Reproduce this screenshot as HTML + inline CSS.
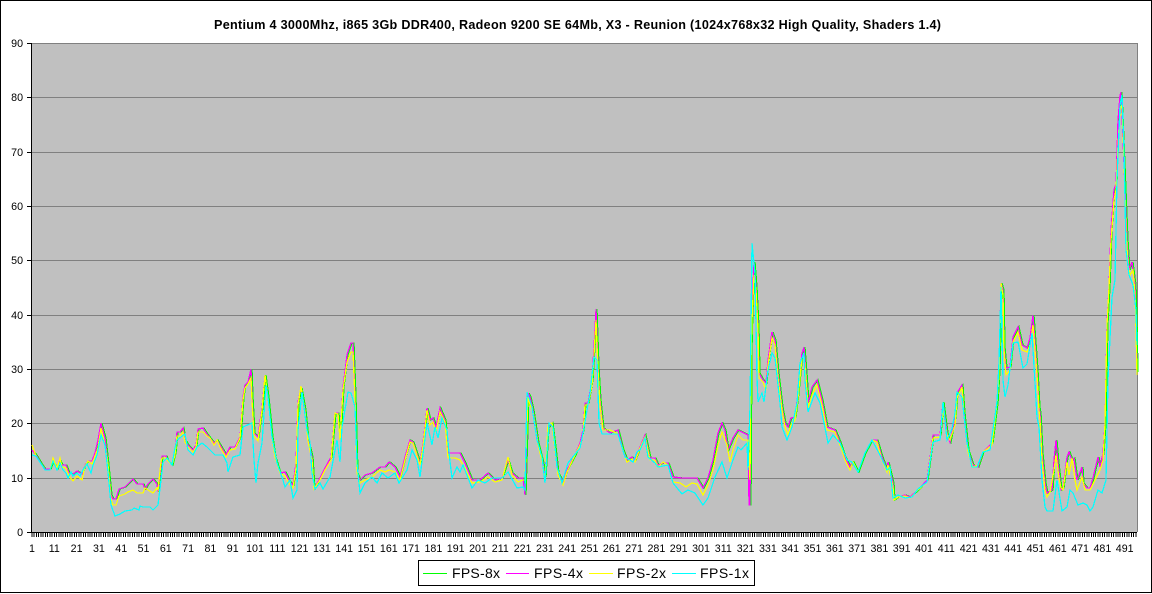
<!DOCTYPE html>
<html><head><meta charset="utf-8"><title>Chart</title>
<style>
html,body{margin:0;padding:0;background:#fff}
svg{display:block}
text{font-family:"Liberation Sans",Arial,sans-serif;fill:#000}
.l text{font-size:10.67px;text-anchor:middle}
.y text{font-size:10.67px;text-anchor:end}
.s{fill:none;stroke-width:1.25;shape-rendering:crispEdges;stroke-linejoin:miter}
</style></head><body>
<svg width="1152" height="594" viewBox="0 0 1152 594" xmlns="http://www.w3.org/2000/svg">
<rect x="0.5" y="0.5" width="1151" height="592" fill="#fff" stroke="#000"/>
<text x="214" y="29" font-size="12.6" font-weight="700" textLength="727">Pentium 4 3000Mhz, i865 3Gb DDR400, Radeon 9200 SE 64Mb, X3 - Reunion (1024x768x32 High Quality, Shaders 1.4)</text>
<rect x="31" y="43" width="1106" height="489" fill="#c0c0c0"/>
<g stroke="#808080" shape-rendering="crispEdges">
<path d="M31 43.5H1137.5V532M31 97.5H1137M31 152.5H1137M31 206.5H1137M31 260.5H1137M31 315.5H1137M31 369.5H1137M31 423.5H1137M31 478.5H1137" fill="none"/>
</g>
<g stroke="#000" shape-rendering="crispEdges" fill="none">
<path d="M31.5 43V533M31 532.5H1137"/>
<path d="M27 43.5H31M27 97.5H31M27 152.5H31M27 206.5H31M27 260.5H31M27 315.5H31M27 369.5H31M27 423.5H31M27 478.5H31M27 532.5H31"/>
<path d="M31.5 535H1137" stroke-width="4" stroke-dasharray="1 1.23"/>
</g>
<defs>
<polyline id="m" points="32,450 36,455 42,465 45,469 50,469 53,461 57,469 60,461 62,465 66,465 69,473 73,474 77,471 82,474 85,465 88,461 92,461 95,453 98,440 101,423 105,438 108,465 111,495 113,499 116,499 119,489 125,487 128,484 133,479 137,484 143,484 145,489 148,484 153,479 157,484 158,492 161,465 162,456 166,456 168,461 172,465 175,453 177,432 180,432 183,428 185,440 188,445 193,450 196,445 198,429 203,428 207,434 210,438 214,443 217,440 220,445 226,455 230,447 235,447 240,437 243,397 245,385 248,382 251,369 252,397 254,433 258,437 262,407 265,375 268,397 272,437 275,457 280,473 285,472 290,482 293,485 296,463 298,402 301,388 305,410 308,440 312,457 314,489 320,478 325,468 331,457 335,413 338,413 340,440 343,387 347,355 351,343 353,343 355,397 357,473 360,480 365,475 372,473 380,467 385,467 389,462 395,467 400,477 405,457 410,440 413,442 420,463 423,443 427,408 430,420 433,418 436,427 440,408 445,420 448,453 455,453 460,453 465,463 472,480 480,480 488,473 495,480 502,478 508,460 512,473 518,478 523,478 525,495 528,393 530,397 533,410 538,443 543,463 545,477 548,428 552,423 555,447 558,473 563,482 567,470 575,455 580,443 583,430 585,403 588,403 592,380 594,347 596,309 598,367 600,400 603,428 610,433 618,430 623,450 627,460 632,457 635,460 640,447 645,435 650,458 655,458 658,465 663,463 668,463 673,477 682,478 688,478 692,478 697,478 703,488 708,478 713,460 718,433 722,423 725,430 728,450 733,438 738,430 742,432 748,435 749,505 750,505 751,347 752,310 754,262 756,287 758,327 759,373 763,380 766,383 768,360 772,332 775,340 778,373 782,407 785,423 788,427 791,418 795,417 798,393 802,353 804,347 806,373 808,403 812,387 817,380 822,400 827,427 835,430 840,442 845,457 850,467 853,462 858,472 865,453 872,440 877,440 882,457 887,470 888,462 893,483 894,500 898,497 905,495 910,497 918,490 927,480 932,443 933,435 940,435 943,402 947,433 950,442 955,417 957,393 962,385 964,413 968,450 973,465 978,467 983,452 992,443 997,403 999,370 1001,283 1003,290 1004,347 1006,368 1010,367 1013,337 1018,327 1022,345 1027,348 1030,338 1033,315 1037,370 1039,407 1040,413 1042,453 1045,483 1047,493 1052,490 1054,460 1056,440 1058,463 1061,490 1063,488 1067,457 1069,452 1072,460 1074,458 1077,480 1082,467 1083,483 1087,488 1090,488 1093,478 1098,457 1100,467 1103,453 1105,423 1107,323 1109,287 1111,230 1114,190 1116,184 1118,120 1120,95 1121,92 1123,140 1125,190 1127,240 1129,270 1132,262 1135,285 1136,320 1137,372"/>
</defs>
<use href="#m" x="1" class="s" stroke="#00ff00"/>
<use href="#m" class="s" stroke="#ff00ff"/>
<polyline class="s" stroke="#ffff00" points="32,445 36,456 42,465 45,470 50,470 53,458 57,468 60,458 62,467 66,468 69,476 73,481 77,476 82,480 85,466 88,461 92,464 95,456 98,448 101,428 105,445 108,465 111,500 113,505 116,505 119,496 125,494 128,492 133,490 137,493 143,493 145,488 148,490 153,493 157,488 158,490 161,462 162,458 166,458 168,461 172,465 175,455 177,436 180,436 183,432 185,442 188,447 193,452 196,447 198,432 203,432 207,436 210,438 214,445 217,440 220,447 226,457 230,450 235,449 240,438 243,400 245,388 248,384 251,378 252,400 254,436 258,441 262,410 265,375 268,398 272,437 275,457 280,473 285,476 290,485 293,488 296,468 298,405 301,386 305,412 308,441 312,460 314,489 320,480 325,470 331,460 335,413 338,414 340,440 343,390 347,362 351,352 353,352 355,400 357,473 360,483 365,480 372,477 380,470 385,472 389,470 395,472 400,480 405,460 410,442 413,443 420,465 423,446 427,410 430,425 433,422 436,432 440,412 445,422 448,458 455,458 460,460 465,468 472,483 480,482 488,477 495,482 502,480 508,457 512,475 518,482 523,480 525,480 528,397 530,405 533,412 538,445 543,465 545,480 548,425 552,423 555,450 558,475 563,485 567,472 575,455 580,445 583,435 585,405 588,405 592,385 594,355 596,320 598,370 600,405 603,430 610,430 618,434 623,450 627,462 632,459 635,462 640,448 645,437 650,460 655,460 658,467 663,462 668,465 673,482 680,483 686,487 692,483 697,484 703,495 708,485 713,470 718,445 722,432 727,445 730,462 733,450 738,435 743,440 748,440 750,480 751,360 752,320 754,275 756,290 758,330 759,378 763,382 766,390 768,365 772,338 775,345 778,378 782,410 785,427 788,435 791,425 795,420 798,398 802,358 804,355 806,378 808,408 812,395 817,385 822,405 827,430 835,432 840,445 845,460 850,470 853,462 858,472 865,453 872,440 877,442 882,460 887,472 888,465 893,487 894,500 898,497 905,496 910,498 918,490 927,482 932,445 933,438 940,437 943,410 947,435 950,440 955,425 957,398 962,387 964,415 968,452 973,467 978,465 983,452 992,445 997,403 999,375 1001,283 1003,295 1004,350 1006,375 1010,370 1013,342 1018,332 1022,350 1027,352 1030,345 1033,325 1037,375 1039,410 1040,420 1042,460 1045,490 1047,497 1050,492 1054,470 1056,455 1059,478 1061,488 1063,490 1067,462 1069,475 1072,458 1075,480 1077,490 1082,477 1085,490 1090,490 1095,480 1100,470 1103,460 1105,423 1107,325 1109,287 1111,240 1114,200 1116,190 1118,145 1120,110 1122,105 1124,160 1126,230 1128,265 1130,275 1133,270 1135,295 1136,330 1137,375"/>
<polyline class="s" stroke="#00ffff" points="32,455 36,456 42,465 45,470 50,470 53,461 57,470 60,463 63,470 66,473 68,478 71,472 73,476 77,473 80,476 83,470 87,464 91,473 93,465 97,455 101,435 105,445 108,472 111,505 115,516 120,514 125,511 132,510 134,508 139,510 140,506 143,507 150,507 153,510 158,505 161,480 163,462 167,458 172,465 175,448 177,440 185,434 188,450 193,455 197,447 202,443 207,447 210,450 215,455 223,455 227,463 228,472 233,457 240,455 243,427 252,423 254,460 256,483 258,463 262,443 266,385 268,397 272,437 277,463 282,477 285,487 290,480 293,498 297,490 298,430 302,392 307,430 310,442 312,473 315,489 320,483 323,489 330,477 337,440 340,462 342,427 348,392 351,393 355,407 357,463 360,493 365,483 372,477 377,483 382,473 388,478 395,473 399,483 407,470 412,450 417,460 420,477 427,423 432,445 435,427 438,438 442,418 447,430 449,453 452,478 457,467 460,472 463,465 472,488 478,480 485,483 492,478 502,478 508,472 517,488 523,487 525,490 527,392 532,407 537,440 542,457 545,483 549,423 553,427 557,467 562,483 568,463 580,448 583,433 590,393 594,357 597,360 599,423 602,434 618,434 625,457 633,462 637,452 640,450 645,438 648,457 655,463 658,467 668,465 673,483 682,494 688,490 695,493 703,505 708,498 715,477 722,462 727,478 733,460 738,447 741,450 747,443 748,470 750,407 752,243 755,273 757,377 758,402 762,393 764,402 768,370 772,353 775,358 780,403 782,427 787,440 792,427 797,403 800,363 804,353 805,380 808,412 815,393 820,403 828,443 833,435 840,443 847,460 852,462 858,472 865,453 872,440 880,455 887,470 890,467 893,498 898,495 905,498 912,497 918,489 927,482 933,442 940,440 943,402 947,440 952,429 955,413 957,392 962,397 967,443 972,467 977,467 983,452 990,450 997,402 999,362 1001,287 1003,380 1005,397 1008,385 1013,343 1018,342 1023,368 1027,364 1032,333 1035,383 1037,417 1039,427 1042,480 1045,507 1047,511 1053,511 1057,480 1062,511 1067,507 1070,490 1073,493 1078,505 1083,503 1087,505 1090,511 1093,507 1098,490 1102,493 1106,480 1108,380 1112,297 1115,280 1117,180 1120,105 1122,95 1124,150 1126,250 1129,275 1133,285 1136,310 1137,345"/>
<g class="y">
<text x="23" y="47">90</text><text x="23" y="101">80</text><text x="23" y="156">70</text><text x="23" y="210">60</text><text x="23" y="264">50</text><text x="23" y="319">40</text><text x="23" y="373">30</text><text x="23" y="427">20</text><text x="23" y="482">10</text><text x="23" y="536">0</text>
</g>
<g class="l">
<text x="32" y="552">1</text><text x="54.3" y="552">11</text><text x="76.6" y="552">21</text><text x="98.9" y="552">31</text><text x="121.2" y="552">41</text><text x="143.5" y="552">51</text><text x="165.8" y="552">61</text><text x="188.1" y="552">71</text><text x="210.4" y="552">81</text><text x="232.7" y="552">91</text>
<text x="255" y="552">101</text><text x="277.3" y="552">111</text><text x="299.6" y="552">121</text><text x="321.9" y="552">131</text><text x="344.2" y="552">141</text><text x="366.5" y="552">151</text><text x="388.8" y="552">161</text><text x="411.1" y="552">171</text><text x="433.4" y="552">181</text><text x="455.7" y="552">191</text>
<text x="478" y="552">201</text><text x="500.3" y="552">211</text><text x="522.6" y="552">221</text><text x="544.9" y="552">231</text><text x="567.2" y="552">241</text><text x="589.5" y="552">251</text><text x="611.8" y="552">261</text><text x="634.1" y="552">271</text><text x="656.4" y="552">281</text><text x="678.7" y="552">291</text>
<text x="701" y="552">301</text><text x="723.3" y="552">311</text><text x="745.6" y="552">321</text><text x="767.9" y="552">331</text><text x="790.2" y="552">341</text><text x="812.5" y="552">351</text><text x="834.8" y="552">361</text><text x="857.1" y="552">371</text><text x="879.4" y="552">381</text><text x="901.7" y="552">391</text>
<text x="924" y="552">401</text><text x="946.3" y="552">411</text><text x="968.6" y="552">421</text><text x="990.9" y="552">431</text><text x="1013.2" y="552">441</text><text x="1035.5" y="552">451</text><text x="1057.8" y="552">461</text><text x="1080.1" y="552">471</text><text x="1102.4" y="552">481</text><text x="1124.7" y="552">491</text>
</g>
<rect x="418.5" y="560.5" width="336" height="25" fill="#fff" stroke="#000" shape-rendering="crispEdges"/>
<g shape-rendering="crispEdges">
<path d="M423 573.5H447" stroke="#00ff00"/><path d="M506 573.5H529" stroke="#ff00ff"/><path d="M589 573.5H613" stroke="#ffff00"/><path d="M672 573.5H696" stroke="#00ffff"/>
</g>
<g font-size="14">
<text x="452" y="578" textLength="48">FPS-8x</text><text x="534" y="578" textLength="49">FPS-4x</text><text x="617" y="578" textLength="49">FPS-2x</text><text x="700" y="578" textLength="49">FPS-1x</text>
</g>
</svg>
</body></html>
